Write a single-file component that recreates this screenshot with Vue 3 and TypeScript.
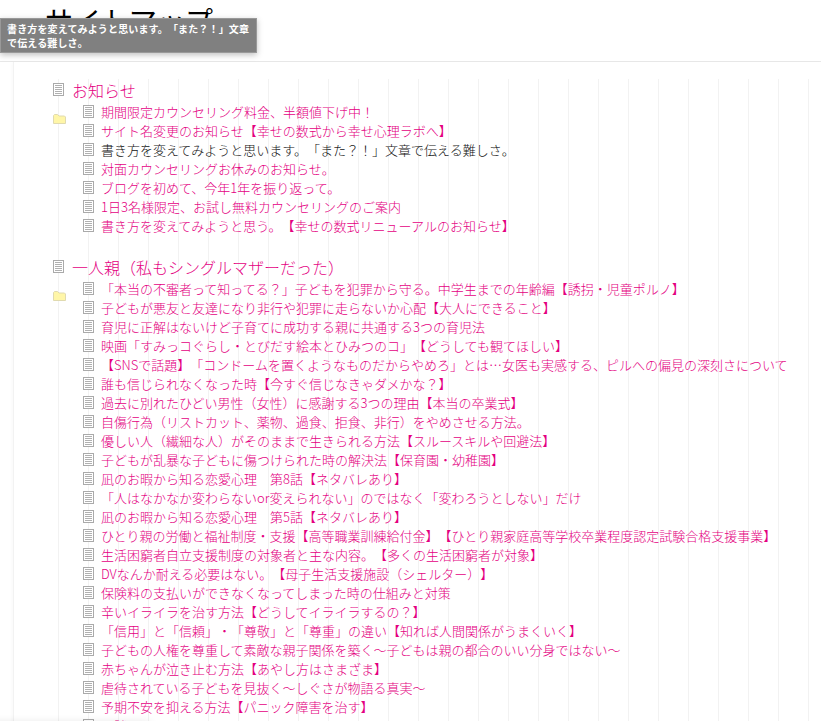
<script setup lang="ts">
interface Item { text: string; plain?: boolean }
interface Section { title: string; items: Item[] }
const t = (s: string): Item => ({ text: s })
const sections: Section[] = [
  {
    title: 'お知らせ',
    items: [
      t('期間限定カウンセリング料金、半額値下げ中！'),
      t('サイト名変更のお知らせ【幸せの数式から幸せ心理ラボへ】'),
      { text: '書き方を変えてみようと思います。「また？！」文章で伝える難しさ。', plain: true },
      t('対面カウンセリングお休みのお知らせ。'),
      t('ブログを初めて、今年1年を振り返って。'),
      t('1日3名様限定、お試し無料カウンセリングのご案内'),
      t('書き方を変えてみようと思う。【幸せの数式リニューアルのお知らせ】'),
    ],
  },
  {
    title: '一人親（私もシングルマザーだった）',
    items: [
      '「本当の不審者って知ってる？」子どもを犯罪から守る。中学生までの年齢編【誘拐・児童ポルノ】',
      '子どもが悪友と友達になり非行や犯罪に走らないか心配【大人にできること】',
      '育児に正解はないけど子育てに成功する親に共通する3つの育児法',
      '映画「すみっコぐらし・とびだす絵本とひみつのコ」【どうしても観てほしい】',
      '【SNSで話題】「コンドームを置くようなものだからやめろ」とは…女医も実感する、ピルへの偏見の深刻さについて',
      '誰も信じられなくなった時【今すぐ信じなきゃダメかな？】',
      '過去に別れたひどい男性（女性）に感謝する3つの理由【本当の卒業式】',
      '自傷行為（リストカット、薬物、過食、拒食、非行）をやめさせる方法。',
      '優しい人（繊細な人）がそのままで生きられる方法【スルースキルや回避法】',
      '子どもが乱暴な子どもに傷つけられた時の解決法【保育園・幼稚園】',
      '凪のお暇から知る恋愛心理　第8話【ネタバレあり】',
      '「人はなかなか変わらないor変えられない」のではなく「変わろうとしない」だけ',
      '凪のお暇から知る恋愛心理　第5話【ネタバレあり】',
      'ひとり親の労働と福祉制度・支援【高等職業訓練給付金】【ひとり親家庭高等学校卒業程度認定試験合格支援事業】',
      '生活困窮者自立支援制度の対象者と主な内容。【多くの生活困窮者が対象】',
      'DVなんか耐える必要はない。【母子生活支援施設（シェルター）】',
      '保険料の支払いができなくなってしまった時の仕組みと対策',
      '辛いイライラを治す方法【どうしてイライラするの？】',
      '「信用」と「信頼」・「尊敬」と「尊重」の違い【知れば人間関係がうまくいく】',
      '子どもの人権を尊重して素敵な親子関係を築く～子どもは親の都合のいい分身ではない～',
      '赤ちゃんが泣き止む方法【あやし方はさまざま】',
      '虐待されている子どもを見抜く～しぐさが物語る真実～',
      '予期不安を抑える方法【パニック障害を治す】',
      '面談',
    ].map(t),
  },
]
</script>

<template>
  <div class="page">
    <header class="head"><h1>サイトマップ</h1></header>
    <main class="card">
      <div class="ruled">
        <section v-for="s in sections" :key="s.title" class="sec">
          <h2 class="title">
            <svg class="doc" viewBox="0 0 11 13" width="11" height="13"><rect x=".5" y=".5" width="10" height="12" fill="#fff" stroke="#aaa" /><path d="M2 2.500h7M2 4.500h7M2 6.500h7M2 8.500h7M2 10.500h7" stroke="#b0b0b0" fill="none" /></svg>
            <a>{{ s.title }}</a>
          </h2>
          <div class="body">
            <svg class="folder" viewBox="0 0 13 10" width="13" height="10"><path d="M.5 9.500V1.500l1-1h3l1.500 1.500h5.500l1 1v6.500z" fill="#fff6a8" stroke="#e0dab0" /></svg>
            <ul>
              <li v-for="i in s.items" :key="i.text" :class="{ plain: i.plain }">
                <svg class="doc" viewBox="0 0 11 13" width="11" height="13"><rect x=".5" y=".5" width="10" height="12" fill="#fff" stroke="#aaa" /><path d="M2 2.500h7M2 4.500h7M2 6.500h7M2 8.500h7M2 10.500h7" stroke="#b0b0b0" fill="none" /></svg>
                <a>{{ i.text }}</a>
              </li>
            </ul>
          </div>
        </section>
      </div>
    </main>
    <div class="tip">書き方を変えてみようと思います。「また？！」文章で伝える難しさ。</div>
    <div class="edge"></div>
  </div>
</template>

<style>
html, body { margin: 0; background: #fff; overflow: hidden; }
</style>

<style scoped>
.page {
  position: relative;
  width: 821px;
  height: 721px;
  overflow: hidden;
  background: #fff;
  font-family: "Noto Sans CJK JP", "Liberation Sans", sans-serif;
  font-weight: 300;
  text-spacing-trim: space-all;
  color: #e4007f;
}
.head {
  height: 62px;
  padding-left: 45px;
  box-sizing: border-box;
  border-bottom: 1px solid #e8e8e8;
}
.head h1 {
  margin: 0;
  font-size: 28px;
  font-weight: 400;
  line-height: 40px;
  color: #000;
}
.card {
  margin-left: 13px;
  padding-top: 17px;
  border-left: 1px solid #f2f2f2;
  box-shadow: -2px 0 3px rgba(0, 0, 0, 0.02);
}
.ruled {
  margin-left: 39px;
  background: linear-gradient(to right, #f2f2f2 0, #f2f2f2 1px, transparent 1px) 5px 0 / 30px 100%;
}
.sec { padding-bottom: 21px; }
.title {
  display: flex;
  align-items: center;
  margin: 0;
  height: 23px;
  padding-bottom: 2px;
  box-sizing: border-box;
  font-size: 16px;
  font-weight: 300;
}
.title .doc { margin-right: 8px; }
.body { display: flex; }
.folder { margin: 12px 17px 0 0; flex: none; }
ul { margin: 0; padding: 0; list-style: none; }
li {
  display: flex;
  align-items: center;
  height: 19px;
  font-size: 13px;
  white-space: nowrap;
}
li .doc { margin-right: 7px; flex: none; }
.plain { color: #111; }
.tip {
  position: absolute;
  left: 0;
  top: 18px;
  width: 257px;
  height: 35px;
  box-sizing: border-box;
  padding: 3px 4px 3px 6px;
  background: #808080;
  border: 1px solid #999;
  box-shadow: 0 2px 6px rgba(0, 0, 0, 0.25);
  color: #fff;
  font-size: 10px;
  font-weight: 700;
  letter-spacing: 0.15px;
  line-height: 14px;
}
.edge {
  position: absolute;
  left: -20px;
  top: 723px;
  width: 170px;
  height: 20px;
  box-shadow: 0 0 10px rgba(0, 0, 0, 0.12);
}
</style>
